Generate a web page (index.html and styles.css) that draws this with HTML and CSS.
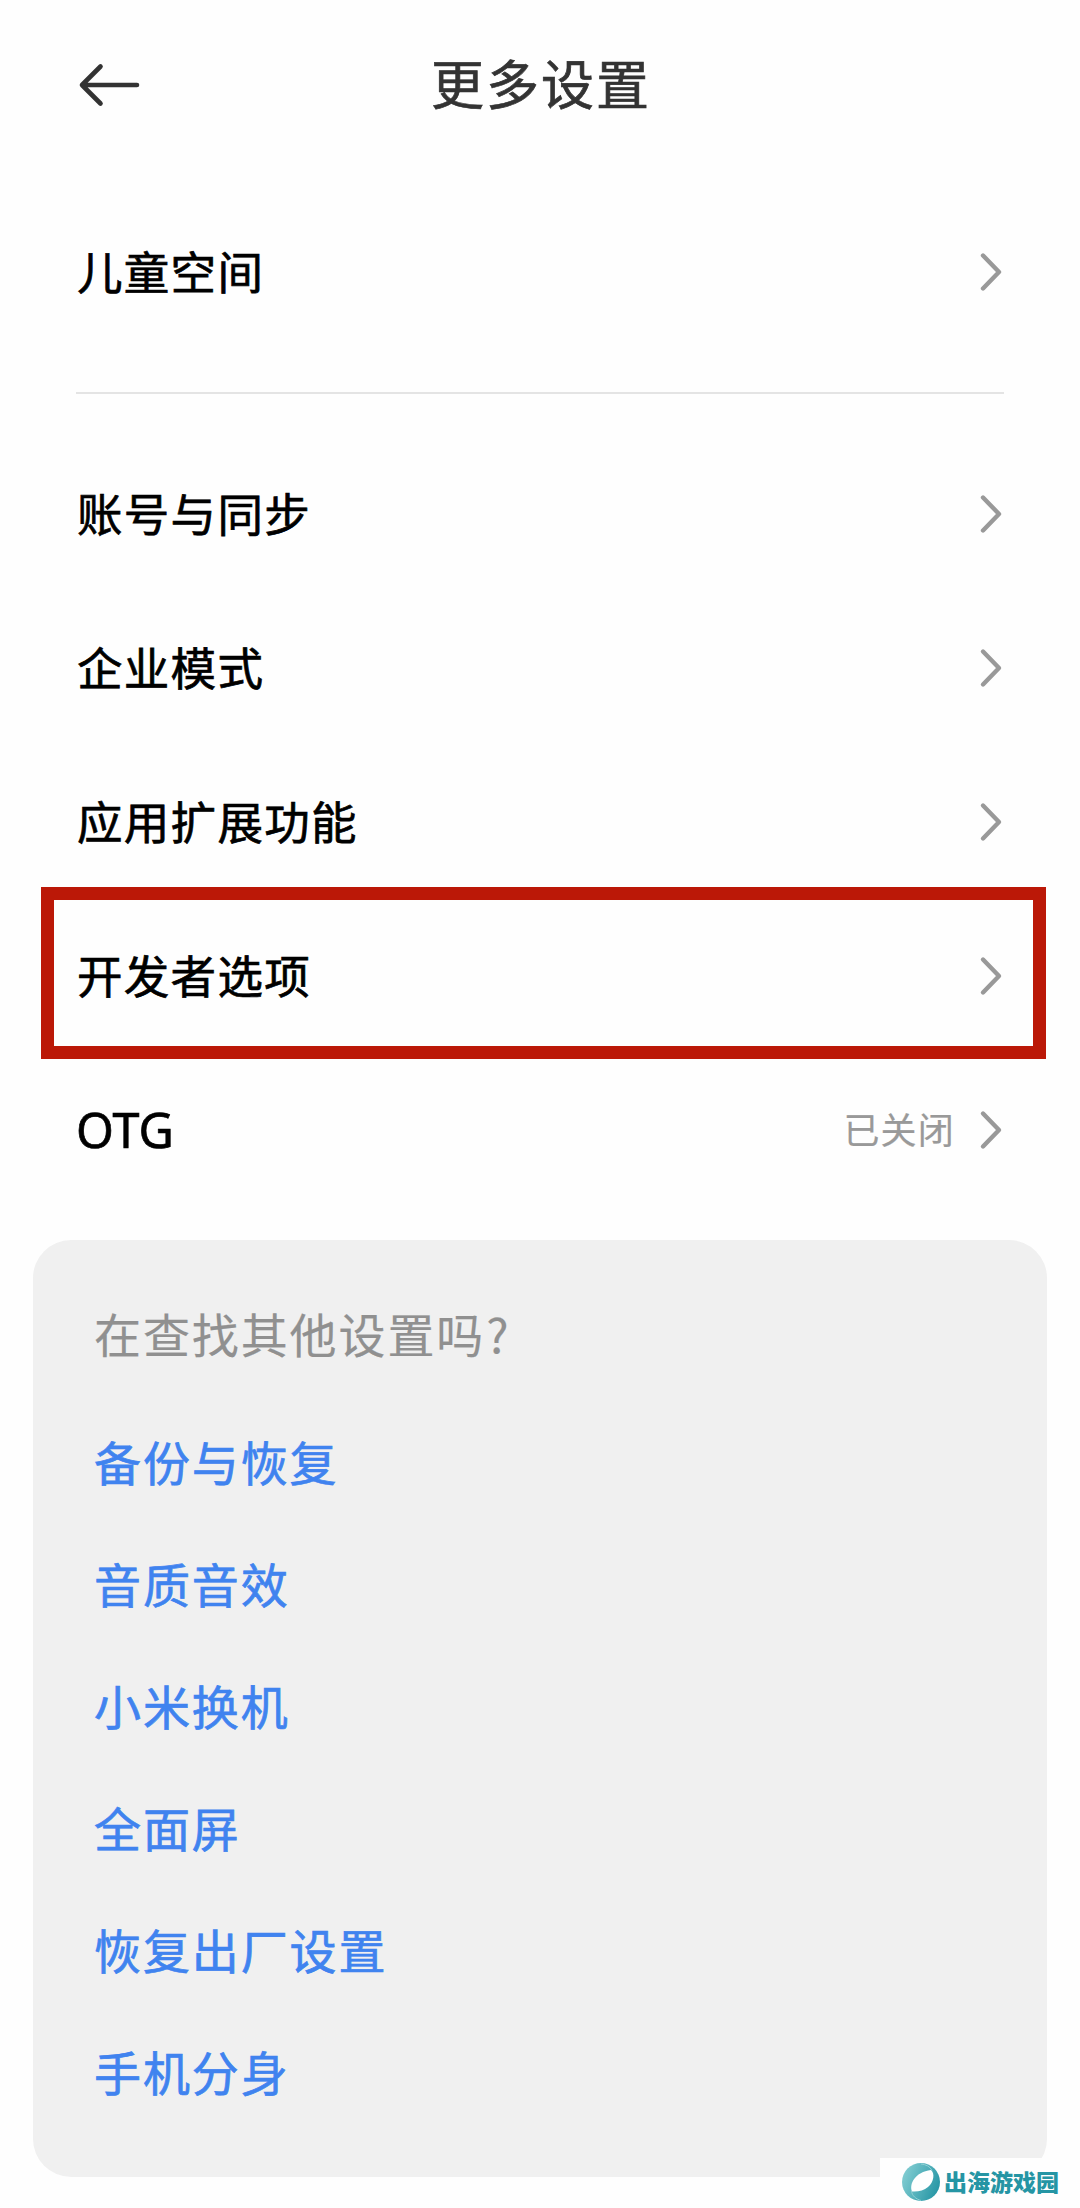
FILE: index.html
```html
<!DOCTYPE html>
<html lang="zh-CN">
	<head>
		<meta charset="UTF-8">
		<title>更多设置</title>
		<link rel="stylesheet" href="styles.css">
	</head>
	<body>
		<svg width="0" height="0" class="defs">
			<symbol id="chevron" viewBox="0 0 24 40">
				<path d="M4 3.5L20 20L4 36.5" fill="none" stroke="#999" stroke-width="4.4" stroke-linecap="round" stroke-linejoin="round"/>
			</symbol>
		</svg>

		<header class="header">
			<svg class="back" viewBox="0 0 64 44">
				<path d="M22.5 3.5L4 22L22.5 40.5M4 22H59" fill="none" stroke="#333" stroke-width="4.6" stroke-linecap="round" stroke-linejoin="round"/>
			</svg>
			<h1>更多设置</h1>
		</header>

		<div class="list">
			<div class="row"><span>儿童空间</span><svg class="chevron"><use href="#chevron"/></svg></div>
			<hr>
			<div class="row"><span>账号与同步</span><svg class="chevron"><use href="#chevron"/></svg></div>
			<div class="row"><span>企业模式</span><svg class="chevron"><use href="#chevron"/></svg></div>
			<div class="row"><span>应用扩展功能</span><svg class="chevron"><use href="#chevron"/></svg></div>
			<div class="row marked"><span>开发者选项</span><svg class="chevron"><use href="#chevron"/></svg></div>
			<div class="row">
				<span class="latin">OTG</span>
				<span class="value">已关闭</span>
				<svg class="chevron"><use href="#chevron"/></svg>
			</div>
		</div>

		<div class="card">
			<p class="tip">在查找其他设置吗<span class="question">?</span></p>
			<a>备份与恢复</a>
			<a>音质音效</a>
			<a>小米换机</a>
			<a>全面屏</a>
			<a>恢复出厂设置</a>
			<a>手机分身</a>
		</div>

		<div class="site-logo">
			<svg class="site-icon" viewBox="0 0 40 40">
				<defs>
					<linearGradient id="ring" x1="0" y1="0.3" x2="1" y2="0.7">
						<stop offset="0" stop-color="#82cdd2"/>
						<stop offset="1" stop-color="#2595a4"/>
					</linearGradient>
				</defs>
				<circle cx="20" cy="20" r="19" fill="url(#ring)"/>
				<path d="M11 29.500C8 22 14 10 30 8C34 11 33 20 27 25C23 28.500 17 30 11 29.500Z" fill="#fff"/>
				<path d="M10.500 29C11 34 15 37 20 38.500M31 8.500C29 4.500 25 2.500 20 2" fill="none" stroke="#8fd0d5" stroke-width="1"/>
			</svg>
			<span>出海游戏园</span>
		</div>
	</body>
</html>
```

FILE: styles.css
```css
body {
	position: relative;
	margin: 0;
	width: 1080px;
	height: 2208px;
	overflow: hidden;
	background: #fefefe;
	color: #000;
	font-family: "Noto Sans CJK SC", sans-serif;
}
	.defs {
		position: absolute;
	}
	.header {
		display: grid;
		grid-template-columns: 64px 1fr 64px;
		align-items: center;
		height: 169px;
		padding: 0 78px;
	}
	.back {
		width: 64px;
		height: 44px;
	}
	h1 {
		margin: 0;
		padding: 0 0 6px 2px;
		font-size: 53px;
		font-weight: 400;
		letter-spacing: 2px;
		line-height: 80px;
		text-align: center;
		color: #333;
		-webkit-text-stroke: 0.7px;
	}
	.list {
		padding: 26px 76px 0;
	}
	.row {
		display: flex;
		align-items: center;
		height: 154px;
		font-size: 45.5px;
		letter-spacing: 1.3px;
		line-height: 60px;
		-webkit-text-stroke: 0.7px;
	}
	.row span {
		padding: 0 0 5px 1px;
	}
	.row .latin {
		padding: 0 0 2px;
		font-family: "Noto Sans", sans-serif;
		font-size: 48.5px;
		letter-spacing: 0;
	}
	.chevron {
		width: 24px;
		height: 40px;
		margin-left: auto;
		margin-right: 1px;
	}
	.row .value {
		margin-left: auto;
		font-size: 36px;
		letter-spacing: 1.2px;
		color: #999;
		-webkit-text-stroke: 0.2px;
	}
	.value + .chevron {
		margin-left: 24px;
	}
	hr {
		height: 2px;
		margin: 43px 0;
		border: none;
		background: #e4e4e4;
	}
	.marked {
		position: relative;
	}
	.marked::after {
		content: "";
		position: absolute;
		top: -12px;
		left: -35px;
		box-sizing: border-box;
		width: 1005px;
		height: 172px;
		border: 13px solid #bb1807;
	}
	.card {
		box-sizing: border-box;
		width: 1014px;
		height: 937px;
		margin: 33px 0 0 33px;
		padding: 58px 61px 0;
		border-radius: 38px;
		background: #f0f0f0;
		font-size: 47px;
		letter-spacing: 1.9px;
	}
	.tip {
		margin: 0 0 32px;
		line-height: 70px;
		color: #909090;
		-webkit-text-stroke: 0.2px;
	}
	.question {
		margin-left: 1px;
	}
	.card a {
		display: block;
		height: 122px;
		line-height: 122px;
		color: #4083ef;
		-webkit-text-stroke: 0.7px;
	}
	.site-logo {
		position: absolute;
		right: 0;
		bottom: 0;
		display: flex;
		align-items: center;
		box-sizing: border-box;
		width: 200px;
		height: 50px;
		padding-left: 21px;
		background: #fefefe;
		font-size: 23px;
		font-weight: 900;
		line-height: 30px;
		color: #2595a4;
	}
	.site-logo span {
		padding-bottom: 4px;
	}
	.site-icon {
		width: 40px;
		height: 40px;
		margin: 0 3px 2px 0;
	}
```
